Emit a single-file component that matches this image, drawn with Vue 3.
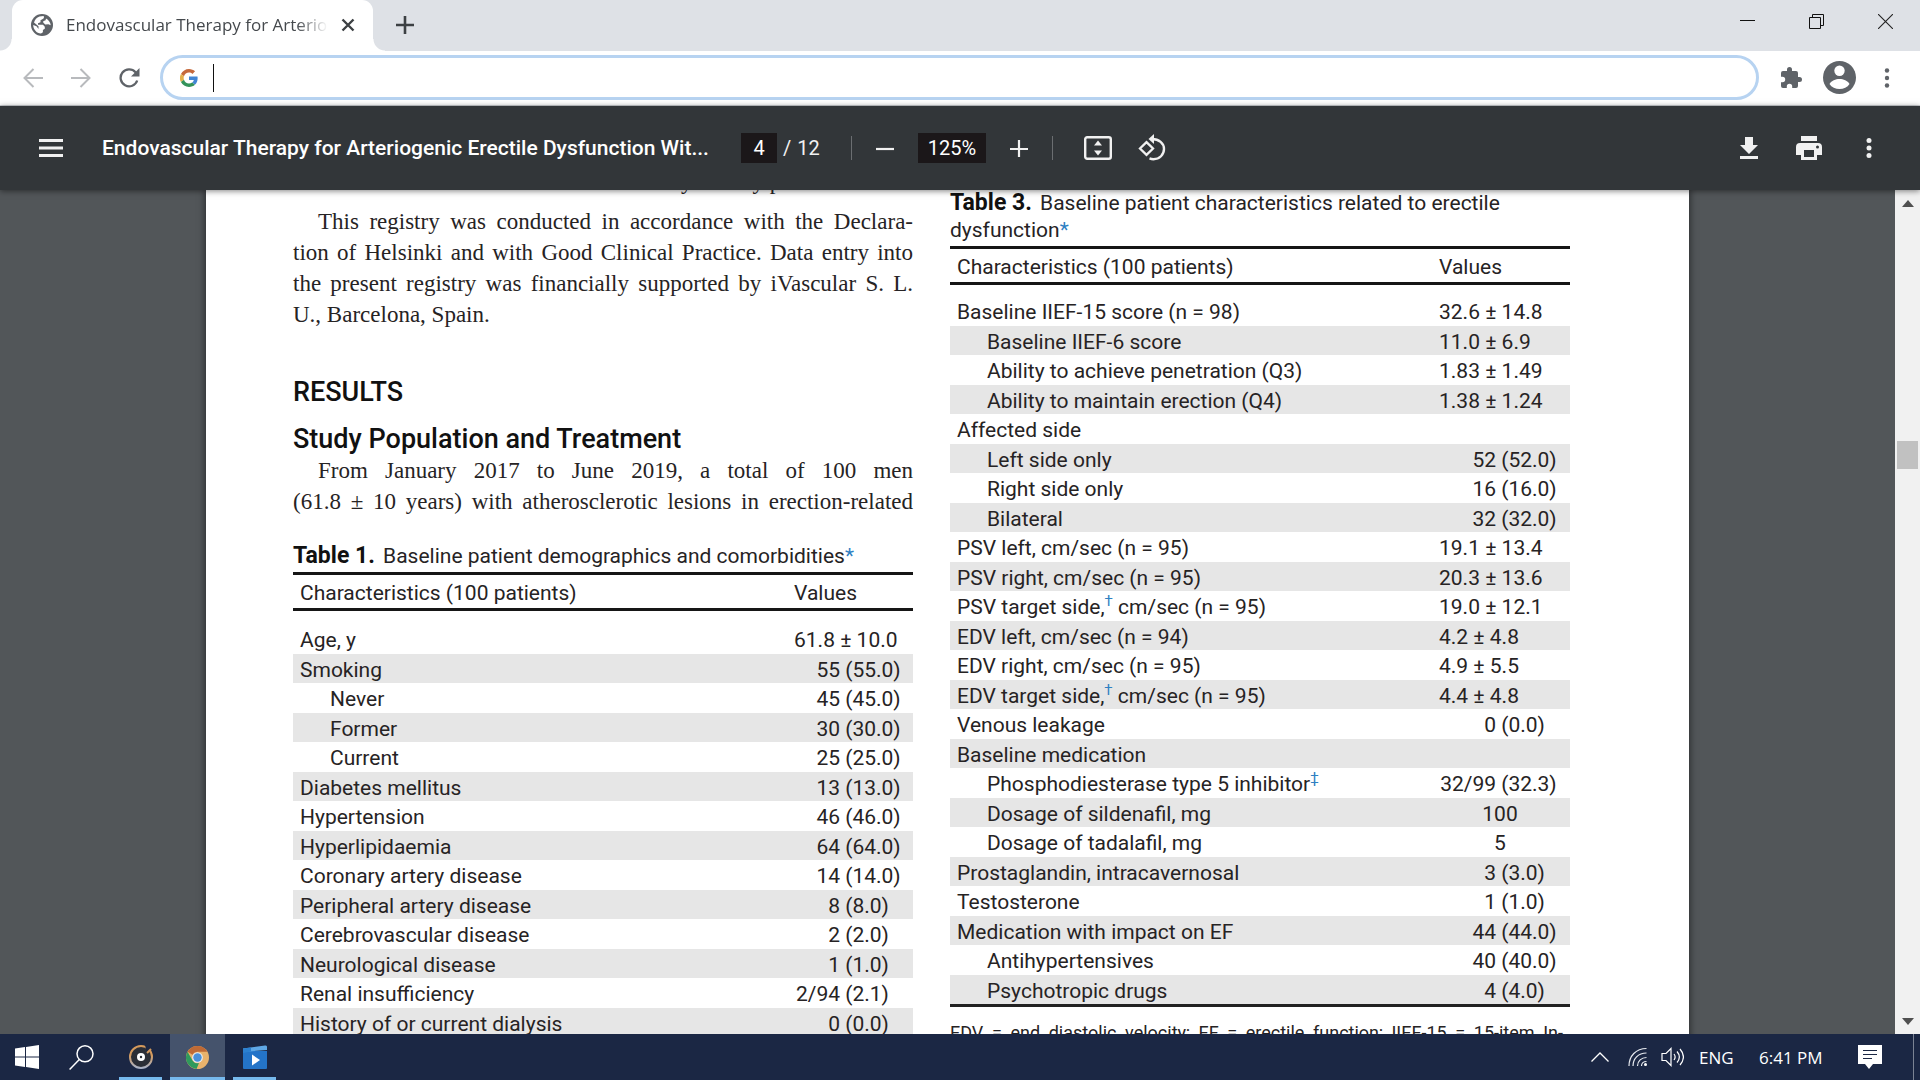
<script setup>
import { ref } from 'vue'

const address = ref('')
const pageNumber = ref('4')
const zoomLevel = ref('125%')

const paragraph = [
  'This registry was conducted in accordance with the Declara-',
  'tion of Helsinki and with Good Clinical Practice. Data entry into',
  'the present registry was financially supported by iVascular S. L.',
  'U., Barcelona, Spain.',
]

const population = [
  'From January 2017 to June 2019, a total of 100 men',
  '(61.8 ± 10 years) with atherosclerotic lesions in erection-related',
]

const demographics = [
  { label: 'Age, y', text: '61.8 ± 10.0' },
  { label: 'Smoking', n: '55', pct: '(55.0)' },
  { label: 'Never', sub: true, n: '45', pct: '(45.0)' },
  { label: 'Former', sub: true, n: '30', pct: '(30.0)' },
  { label: 'Current', sub: true, n: '25', pct: '(25.0)' },
  { label: 'Diabetes mellitus', n: '13', pct: '(13.0)' },
  { label: 'Hypertension', n: '46', pct: '(46.0)' },
  { label: 'Hyperlipidaemia', n: '64', pct: '(64.0)' },
  { label: 'Coronary artery disease', n: '14', pct: '(14.0)' },
  { label: 'Peripheral artery disease', n: '8', pct: '(8.0)' },
  { label: 'Cerebrovascular disease', n: '2', pct: '(2.0)' },
  { label: 'Neurological disease', n: '1', pct: '(1.0)' },
  { label: 'Renal insufficiency', n: '2/94', pct: '(2.1)' },
  { label: 'History of or current dialysis', n: '0', pct: '(0.0)' },
]

const characteristics = [
  { label: 'Baseline IIEF-15 score (n = 98)', text: '32.6 ± 14.8' },
  { label: 'Baseline IIEF-6 score', sub: true, text: '11.0 ± 6.9' },
  { label: 'Ability to achieve penetration (Q3)', sub: true, text: '1.83 ± 1.49' },
  { label: 'Ability to maintain erection (Q4)', sub: true, text: '1.38 ± 1.24' },
  { label: 'Affected side' },
  { label: 'Left side only', sub: true, n: '52', pct: '(52.0)' },
  { label: 'Right side only', sub: true, n: '16', pct: '(16.0)' },
  { label: 'Bilateral', sub: true, n: '32', pct: '(32.0)' },
  { label: 'PSV left, cm/sec (n = 95)', text: '19.1 ± 13.4' },
  { label: 'PSV right, cm/sec (n = 95)', text: '20.3 ± 13.6' },
  { label: 'PSV target side,', mark: '†', rest: ' cm/sec (n = 95)', text: '19.0 ± 12.1' },
  { label: 'EDV left, cm/sec (n = 94)', text: '4.2 ± 4.8' },
  { label: 'EDV right, cm/sec (n = 95)', text: '4.9 ± 5.5' },
  { label: 'EDV target side,', mark: '†', rest: ' cm/sec (n = 95)', text: '4.4 ± 4.8' },
  { label: 'Venous leakage', n: '0', pct: '(0.0)' },
  { label: 'Baseline medication' },
  { label: 'Phosphodiesterase type 5 inhibitor', mark: '‡', sub: true, n: '32/99', pct: '(32.3)' },
  { label: 'Dosage of sildenafil, mg', sub: true, center: '100' },
  { label: 'Dosage of tadalafil, mg', sub: true, center: '5' },
  { label: 'Prostaglandin, intracavernosal', n: '3', pct: '(3.0)' },
  { label: 'Testosterone', n: '1', pct: '(1.0)' },
  { label: 'Medication with impact on EF', n: '44', pct: '(44.0)' },
  { label: 'Antihypertensives', sub: true, n: '40', pct: '(40.0)' },
  { label: 'Psychotropic drugs', sub: true, n: '4', pct: '(4.0)' },
]
</script>

<template>
  <div class="screen">
    <header class="tabstrip">
      <div class="tab">
        <svg class="favicon" width="22" height="22" viewBox="0 0 22 22">
          <circle cx="11" cy="11" r="11" fill="#5f6368" />
          <path d="M8.500 2.500 12.500 2c1 1 .5 2.300-.8 3L9.500 6.200v2L7 9.300v1.400h5l1.800 2v2l-1.900 1.200v2.300L10 19.600C5.500 19.300 2.300 15.500 2.200 11l3.300 1.200L7.500 15v-2.800L3 8.400C3.900 5.600 5.600 3.500 8.500 2.500ZM15 4.500c2.700 1.500 4.500 4 4.700 6.800l-2.300-1-3.200.2-2-2V7.200l2.400-1Z" fill="#fff" />
        </svg>
        <span class="tab-title">Endovascular Therapy for Arterio</span>
        <button class="icon-btn tab-close" aria-label="Close tab">
          <svg width="14" height="14" viewBox="0 0 14 14"><path d="M1.500 1.500l11 11M12.500 1.500l-11 11" stroke="#3c4043" stroke-width="2.400" /></svg>
        </button>
      </div>
      <button class="icon-btn new-tab" aria-label="New tab">
        <svg width="18" height="18" viewBox="0 0 18 18"><path d="M9 0v18M0 9h18" stroke="#3c4043" stroke-width="2.600" /></svg>
      </button>
      <div class="window-controls">
        <button class="icon-btn" aria-label="Minimize">
          <svg width="15" height="15" viewBox="0 0 15 15"><path d="M0 6.500h15" stroke="#111" /></svg>
        </button>
        <button class="icon-btn" aria-label="Restore">
          <svg width="15" height="15" viewBox="0 0 15 15"><path d="M.5 3.500h11v11H.5zM3.500 3V.5h11v11H12" fill="none" stroke="#111" /></svg>
        </button>
        <button class="icon-btn" aria-label="Close">
          <svg width="15" height="15" viewBox="0 0 15 15"><path d="M0 0l15 15M15 0L0 15" stroke="#222" stroke-width="1.100" /></svg>
        </button>
      </div>
    </header>

    <nav class="toolbar">
      <div class="nav-buttons">
        <button class="icon-btn" aria-label="Back">
          <svg width="20" height="20" viewBox="0 0 20 20"><path d="M20 10H2M10.500 1 1.500 10l9 9" fill="none" stroke="#b8babd" stroke-width="2" /></svg>
        </button>
        <button class="icon-btn" aria-label="Forward">
          <svg width="20" height="20" viewBox="0 0 20 20"><path d="M0 10h18M9.500 1l9 9-9 9" fill="none" stroke="#b8babd" stroke-width="2" /></svg>
        </button>
        <button class="icon-btn" aria-label="Reload">
          <svg width="22" height="20" viewBox="0 0 22 20"><path d="M18.200 12.500A8.500 8.500 0 1 1 16.500 4.200L18 6" fill="none" stroke="#5f6368" stroke-width="2.300" /><path d="M20.500 0v8.500H12Z" fill="#5f6368" /></svg>
        </button>
      </div>
      <label class="omnibox">
        <svg width="18" height="18" viewBox="0 0 48 48">
          <path fill="#c5693c" d="M24 9.500c3.500 0 6.700 1.200 9.200 3.600l6.900-6.900C35.900 2.400 30.500 0 24 0 14.600 0 6.500 5.400 2.600 13.200l8 6.200C12.400 13.700 17.700 9.500 24 9.500z" />
          <path fill="#4285d4" d="M47 24.600c0-1.600-.2-3.100-.4-4.600H24v9h12.900c-.6 3-2.200 5.500-4.700 7.200l7.700 6C44.400 38 47 31.800 47 24.600z" />
          <path fill="#e3b04b" d="M10.500 28.600A14.500 14.500 0 0 1 10.500 19.400l-8-6.200a24 24 0 0 0 0 21.600z" />
          <path fill="#34935a" d="M24 48c6.500 0 11.900-2.100 15.900-5.800l-7.700-6c-2.200 1.500-4.900 2.300-8.200 2.300-6.300 0-11.600-4.200-13.500-9.900l-8 6.200C6.500 42.600 14.600 48 24 48z" />
        </svg>
        <span class="caret"></span>
        <input v-model="address" type="text" aria-label="Address and search bar" />
      </label>
      <div class="toolbar-right">
        <button class="icon-btn" aria-label="Extensions">
          <svg width="21" height="22" viewBox="2 1 21 22"><path d="M20.500 11H19V7a2 2 0 0 0-2-2h-4V3.500a2.500 2.500 0 0 0-5 0V5H4a2 2 0 0 0-2 2v3.800h1.500a2.700 2.700 0 0 1 0 5.400H2V20a2 2 0 0 0 2 2h3.800v-1.500a2.700 2.700 0 0 1 5.400 0V22H17a2 2 0 0 0 2-2v-4h1.500a2.500 2.500 0 0 0 0-5z" fill="#5f6368" /></svg>
        </button>
        <button class="icon-btn" aria-label="Profile">
          <svg width="33" height="33" viewBox="0 0 33 33"><circle cx="16.500" cy="16.500" r="16.500" fill="#5f6368" /><circle cx="16.500" cy="9.800" r="5.200" fill="#fff" /><path d="M6.500 23c2-3.500 6-5 10-5s8 1.500 10 5c-2 3.400-6 5-10 5s-8-1.600-10-5Z" fill="#fff" /></svg>
        </button>
        <button class="icon-btn" aria-label="Menu">
          <svg width="6" height="20" viewBox="0 0 6 20" fill="#5f6368"><circle cx="3" cy="2.500" r="2.200" /><circle cx="3" cy="10" r="2.200" /><circle cx="3" cy="17.500" r="2.200" /></svg>
        </button>
      </div>
    </nav>

    <div class="pdf-bar">
      <button class="icon-btn" aria-label="Sidebar">
        <svg width="24" height="18" viewBox="0 0 24 18"><path d="M0 1.500h24M0 9h24M0 16.500h24" stroke="#f1f1f1" stroke-width="2.800" /></svg>
      </button>
      <h1 class="pdf-title">Endovascular Therapy for Arteriogenic Erectile Dysfunction Wit...</h1>
      <div class="pager">
        <input v-model="pageNumber" class="page-input" type="text" aria-label="Page number" />
        <span>/</span>
        <span>12</span>
      </div>
      <i class="divider"></i>
      <div class="zoomer">
        <button class="icon-btn" aria-label="Zoom out">
          <svg width="18" height="18" viewBox="0 0 18 18"><path d="M0 10h18" stroke="#f1f1f1" stroke-width="2.200" /></svg>
        </button>
        <input v-model="zoomLevel" class="zoom-input" type="text" aria-label="Zoom level" />
        <button class="icon-btn" aria-label="Zoom in">
          <svg width="18" height="18" viewBox="0 0 18 18"><path d="M0 10h18M9 1v17" stroke="#f1f1f1" stroke-width="2.200" /></svg>
        </button>
      </div>
      <i class="divider"></i>
      <div class="view-tools">
        <button class="icon-btn" aria-label="Fit to page">
          <svg width="28" height="24" viewBox="0 0 28 24"><rect x="1.200" y="1.200" width="25.600" height="21.600" rx="2" fill="none" stroke="#f1f1f1" stroke-width="2.400" /><path d="M14 4.500l4 5h-8zM14 19.500l4-5h-8z" fill="#f1f1f1" /></svg>
        </button>
        <button class="icon-btn" aria-label="Rotate">
          <svg width="28" height="28" viewBox="0 0 28 28"><path d="M8.500 8.200l6.500 6.300-6.500 6.300L2 14.500Z" fill="none" stroke="#f1f1f1" stroke-width="2.300" /><path d="M14 5c7 0 12 4.300 12 10s-4.500 10.200-10.500 10.200c-1.500 0-2.500-.2-4-.8" fill="none" stroke="#f1f1f1" stroke-width="2.400" /><path d="M16 0v10l-5.500-5z" fill="#f1f1f1" /></svg>
        </button>
      </div>
      <div class="pdf-actions">
        <button class="icon-btn" aria-label="Download">
          <svg width="18" height="22" viewBox="0 0 18 22" fill="#f1f1f1"><path d="M5 0h8v8h5l-9 9-9-9h5zM0 19h18v3H0z" /></svg>
        </button>
        <button class="icon-btn" aria-label="Print">
          <svg width="26" height="24" viewBox="0 0 26 24"><path d="M5 0h16v5H5zM4 7h18a4 4 0 0 1 4 4v8h-5v5H5v-5H0v-8a4 4 0 0 1 4-4z" fill="#f1f1f1" /><path d="M8 14h10v7H8z" fill="#323639" /><circle cx="21.500" cy="11" r="1.500" fill="#323639" /></svg>
        </button>
        <button class="icon-btn" aria-label="More actions">
          <svg width="6" height="20" viewBox="0 0 6 20" fill="#f1f1f1"><circle cx="3" cy="2.500" r="2.500" /><circle cx="3" cy="10" r="2.500" /><circle cx="3" cy="17.500" r="2.500" /></svg>
        </button>
      </div>
    </div>

    <main class="viewer">
      <div class="canvas">
        <article class="page">
          <section class="col">
            <p class="serif-line previous">y a study p</p>
            <p class="serif-text">
              <span v-for="(line, i) in paragraph" :key="i" class="serif-line" :class="{ indent: i === 0, last: i === 3 }">{{ line }}</span>
            </p>
            <h2>RESULTS</h2>
            <h3>Study Population and Treatment</h3>
            <p class="serif-text">
              <span v-for="(line, i) in population" :key="i" class="serif-line" :class="{ indent: i === 0 }">{{ line }}</span>
            </p>
            <table class="data demographics">
              <caption><b>Table 1.</b> Baseline patient demographics and comorbidities<a href="#note">*</a></caption>
              <thead>
                <tr><th scope="col">Characteristics (100 patients)</th><th scope="col" class="value">Values</th></tr>
              </thead>
              <tbody>
                <tr v-for="row in demographics" :key="row.label">
                  <td :class="{ sub: row.sub }">{{ row.label }}</td>
                  <td class="value"><template v-if="row.n"><span class="count">{{ row.n }}</span> {{ row.pct }}</template><template v-else>{{ row.text }}</template></td>
                </tr>
              </tbody>
            </table>
          </section>

          <section class="col">
            <table class="data characteristics">
              <caption><b>Table 3.</b> Baseline patient characteristics related to erectile<br />dysfunction<a href="#note">*</a></caption>
              <thead>
                <tr><th scope="col">Characteristics (100 patients)</th><th scope="col" class="value">Values</th></tr>
              </thead>
              <tbody>
                <tr v-for="row in characteristics" :key="row.label">
                  <td :class="{ sub: row.sub }">{{ row.label }}<a v-if="row.mark" class="mark" href="#note">{{ row.mark }}</a>{{ row.rest }}</td>
                  <td class="value"><template v-if="row.n"><span class="count">{{ row.n }}</span> {{ row.pct }}</template><span v-else-if="row.center" class="centered">{{ row.center }}</span><template v-else>{{ row.text }}</template></td>
                </tr>
              </tbody>
            </table>
            <p id="note" class="footnote">EDV = end diastolic velocity; EF = erectile function; IIEF-15 = 15-item In-</p>
          </section>
        </article>
      </div>
      <div class="scrollbar">
        <svg width="12" height="7" viewBox="0 0 12 7"><path d="M6 0l6 7H0z" fill="#505050" /></svg>
        <div class="track"><div class="thumb"></div></div>
        <svg width="12" height="7" viewBox="0 0 12 7"><path d="M6 7l6-7H0z" fill="#505050" /></svg>
      </div>
    </main>

    <footer class="taskbar">
      <button class="task" aria-label="Start">
        <svg width="24" height="24" viewBox="0 0 24 24" fill="#fff"><path d="M0 3.400l10-1.400v9.500H0zM11 1.900L24 0v11.500H11zM0 12.500h10V22L0 20.600zM11 12.500h13V24l-13-1.900z" /></svg>
      </button>
      <button class="task search" aria-label="Search">
        <svg width="25" height="25" viewBox="0 0 25 25" fill="none" stroke="#fff" stroke-width="1.500"><circle cx="16" cy="8.800" r="8" /><path d="M10.300 14.500L.6 24.400" /></svg>
      </button>
      <button class="task running" aria-label="Music player">
        <svg width="24" height="24" viewBox="0 0 24 24"><defs><linearGradient id="ring" x1="0" y1="0" x2="0" y2="1"><stop offset=".4" stop-color="#d59a5c" /><stop offset="1" stop-color="#a9b2c6" /></linearGradient></defs><circle cx="12" cy="12" r="11" fill="#2b2e36" stroke="url(#ring)" stroke-width="2" /><path d="M16 0h5v6l-3 3z" fill="#1b2744" /><path d="M18 8l4-4" stroke="#d59a5c" stroke-width="2" /><circle cx="12" cy="12" r="4" fill="#fff" /><circle cx="12" cy="12" r="1.200" fill="#2b2e36" /></svg>
      </button>
      <button class="task running active" aria-label="Chrome">
        <svg width="23" height="23" viewBox="0 0 24 24"><circle cx="12" cy="12" r="12" fill="#e9b36c" /><path d="M12 0a12 12 0 0 1 10.400 6H12a6 6 0 0 0-5.200 3L1.600 6A12 12 0 0 1 12 0z" fill="#bf6a35" /><path d="M1.600 6l5.200 9a6 6 0 0 0 5.200 3l1.500-.2L11 24A12 12 0 0 1 1.600 6z" fill="#2f9a5c" /><circle cx="12" cy="12" r="5.600" fill="#e8edf2" /><circle cx="12" cy="12" r="4.400" fill="#4a90d9" /></svg>
      </button>
      <button class="task running movies" aria-label="Movies">
        <svg width="24" height="24" viewBox="0 0 24 24"><path d="M0 6h24v17a1 1 0 0 1-1 1H1a1 1 0 0 1-1-1z" fill="#2474c8" /><path d="M0 3.500L22 .500a1.500 1.500 0 0 1 2 1.500v3L0 7z" fill="#5fa8e6" /><path d="M0 3.500l8-1v4L0 8z" fill="#2b80d0" /><path d="M9 9.500l8 5.500-8 5.500z" fill="#fff" /></svg>
      </button>
      <div class="tray">
        <svg width="18" height="10" viewBox="0 0 18 10" fill="none" stroke="#fff" stroke-width="1.300"><path d="M.5 9.500L9 1l8.500 8.500" /></svg>
        <svg width="20" height="20" viewBox="0 0 20 20" fill="none" stroke="#e8ebf0" stroke-width="1.200"><path d="M1 19C1 9 8 1.500 18.500 1.500M5 19C5 12 10 6 18.500 6M9.500 19c0-5 4-8.500 9-8.500M13.500 19c0-2.500 2-4.500 5-4.500" /><circle cx="17.500" cy="17.500" r="1.500" fill="#fff" stroke="none" /></svg>
        <svg width="23" height="20" viewBox="0 0 23 20" fill="none" stroke="#fff" stroke-width="1.200"><path d="M1 6.500h4L10 1.500v17l-5-5H1zM13 7c1.500 2 1.500 4 0 6M16 4.500c3 3.500 3 7.500 0 11M19 2c4.300 5 4.300 11 0 16" /></svg>
        <span class="lang">ENG</span>
        <time>6:41 PM</time>
        <button class="icon-btn notice" aria-label="Notifications">
          <svg width="24" height="24" viewBox="0 0 24 24"><path d="M0 0h24v19H15l-4 5-4-5H0z" fill="#fff" /><path d="M5 5.500h14M5 9.500h14M5 13.500h9" stroke="#1b2744" stroke-width="1.200" /></svg>
        </button>
        <i class="show-desktop"></i>
      </div>
    </footer>
  </div>
</template>

<style>
body {
  margin: 0;
}
</style>

<style scoped>
.screen {
  display: flex;
  flex-direction: column;
  height: 100vh;
  overflow: hidden;
  background: #fff;
}

svg {
  display: block;
  flex: none;
}

.icon-btn,
.task {
  display: flex;
  align-items: center;
  justify-content: center;
  padding: 0;
  border: 0;
  background: none;
}

/* Tab strip */
.tabstrip {
  display: flex;
  align-items: stretch;
  height: 51px;
  flex: none;
  background: #dee1e6;
}

.tab {
  position: relative;
  display: flex;
  align-items: center;
  box-sizing: border-box;
  width: 361px;
  margin-left: 12px;
  padding: 0 18px 2px 19px;
  border-radius: 11px 11px 0 0;
  background: #fff;
}

.tab::before,
.tab::after {
  content: '';
  position: absolute;
  bottom: 0;
  width: 12px;
  height: 12px;
}

.tab::before {
  right: 100%;
  background: radial-gradient(circle at 0 0, #dee1e6 11px, #fff 12px);
}

.tab::after {
  left: 100%;
  background: radial-gradient(circle at 100% 0, #dee1e6 11px, #fff 12px);
}

.tab-title {
  flex: 1;
  margin: 0 13px;
  overflow: hidden;
  white-space: nowrap;
  font: 17px 'Open Sans', sans-serif;
  color: #45494d;
  -webkit-mask-image: linear-gradient(90deg, #000 88%, transparent);
  mask-image: linear-gradient(90deg, #000 88%, transparent);
}

.new-tab {
  margin-left: 23px;
  padding-bottom: 2px;
}

.window-controls {
  display: flex;
  align-items: center;
  gap: 54px;
  margin: 0 27px 8px auto;
}

/* Browser toolbar */
.toolbar {
  display: flex;
  align-items: center;
  box-sizing: border-box;
  height: 55px;
  flex: none;
  padding: 0 30px 1px 23px;
  border-bottom: 1px solid #d0d3d7;
}

.nav-buttons {
  display: flex;
  gap: 28px;
}

.omnibox {
  display: flex;
  align-items: center;
  flex: 1;
  box-sizing: border-box;
  height: 45px;
  margin: 0 22px 0 19px;
  padding: 0 17px;
  border: 3px solid #b7d3f1;
  border-radius: 23px;
}

.caret {
  width: 1px;
  height: 28px;
  margin-left: 15px;
  background: #111;
}

.omnibox input {
  flex: 1;
  border: 0;
  outline: 0;
  background: none;
  font: 19px 'Open Sans', sans-serif;
}

.toolbar-right {
  display: flex;
  align-items: center;
  gap: 21px;
}

.toolbar-right .icon-btn:last-child {
  margin-left: 7px;
}

/* PDF toolbar */
.pdf-bar {
  position: relative;
  z-index: 1;
  display: flex;
  align-items: center;
  box-sizing: border-box;
  height: 84px;
  flex: none;
  padding: 0 48px 0 39px;
  background: #323639;
  box-shadow: 0 1px 6px rgba(0, 0, 0, 0.5);
  font: 20px Roboto, sans-serif;
  color: #f1f1f1;
}

.pdf-title {
  width: 602px;
  margin: 0 0 0 39px;
  white-space: nowrap;
  font: 500 21px Roboto, sans-serif;
  color: #fff;
}

.pager {
  display: flex;
  align-items: center;
  gap: 6px;
  width: 110px;
  margin-left: 37px;
}

.page-input,
.zoom-input {
  box-sizing: border-box;
  height: 30px;
  padding: 0;
  border: 0;
  background: #1b1719;
  font: 20px Roboto, sans-serif;
  color: #fff;
  text-align: center;
}

.page-input {
  width: 36px;
}

.zoom-input {
  width: 68px;
}

.divider {
  width: 1px;
  height: 24px;
  background: #6b6e71;
}

.zoomer {
  display: flex;
  align-items: center;
  gap: 24px;
  margin: 0 24px;
}

.view-tools {
  display: flex;
  align-items: center;
  gap: 26px;
  margin-left: 31px;
}

.pdf-actions {
  display: flex;
  align-items: center;
  gap: 38px;
  margin-left: auto;
}

.pdf-actions .icon-btn:last-child {
  margin-left: 6px;
}

/* Document */
.viewer {
  display: flex;
  flex: 1;
  min-height: 0;
  overflow: hidden;
}

.canvas {
  flex: 1;
  background: #525659;
}

.page {
  display: grid;
  grid-template-columns: 1fr 1fr;
  gap: 37px;
  margin: 0 206px;
  padding: 0 119px 0 87px;
  background: #fff;
  box-shadow: 0 0 7px 1px rgba(0, 0, 0, 0.5);
  font: 21px Roboto, sans-serif;
  color: #262324;
}

.col {
  min-width: 0;
}

.serif-text {
  margin: 0;
}

.serif-line {
  display: block;
  font: 23px/31px 'Liberation Serif', serif;
  text-align: justify;
  text-align-last: justify;
  white-space: nowrap;
}

.serif-line.indent {
  padding-left: 25px;
}

.serif-line.last {
  text-align-last: left;
}

.previous {
  margin: -24px 0 9px;
  padding-left: 388px;
  text-align-last: left;
}

h2,
h3 {
  margin: 0;
  font: 500 27px/32px Roboto, sans-serif;
  color: #111;
}

h2 {
  margin: 46px 0 15px;
}

.data {
  width: 100%;
  border-spacing: 0;
}

.demographics {
  margin-top: 26px;
}

caption {
  padding-bottom: 2px;
  text-align: left;
  line-height: 27px;
}

caption b {
  margin-right: 3px;
  font-size: 23px;
  line-height: 24px;
  font-weight: 700;
  color: #111;
}

.data a {
  color: #2f80c2;
  text-decoration: none;
}

.data .mark {
  line-height: 0;
  vertical-align: 8px;
  font-size: 15px;
}

.data th,
.data td {
  padding: 3px 0 0 7px;
  text-align: left;
  font-weight: 400;
  line-height: 27px;
  white-space: nowrap;
}

.data th {
  padding-top: 4px;
  border-top: 3px solid #161616;
  border-bottom: 3px solid #161616;
  line-height: 29px;
}

.data tr:nth-child(even) td {
  background: #e6e6e6;
  line-height: 26px;
}

.demographics tbody tr:first-child td {
  padding-top: 16px;
}

.characteristics tbody tr:first-child td {
  padding-top: 14px;
}

.data td.sub {
  padding-left: 37px;
}

.data .value {
  padding-left: 0;
}

.demographics .value {
  width: 119px;
}

.characteristics .value {
  width: 131px;
}

.count {
  display: inline-block;
  text-align: right;
}

.demographics .count {
  width: 46px;
}

.characteristics .count {
  width: 57px;
}

.centered {
  display: inline-block;
  width: 122px;
  text-align: center;
}

.characteristics tbody tr:last-child td {
  border-bottom: 3px solid #222;
}

.footnote {
  margin: 14px 0;
  padding-right: 7px;
  font-size: 18px;
  line-height: 24px;
  white-space: nowrap;
  text-align-last: justify;
}

.scrollbar {
  display: flex;
  flex-direction: column;
  align-items: center;
  box-sizing: border-box;
  width: 25px;
  padding: 10px 0 9px;
  background: #f1f1f1;
}

.track {
  flex: 1;
  width: 21px;
  padding-top: 234px;
}

.thumb {
  height: 28px;
  background: #c1c1c1;
}

/* Taskbar */
.taskbar {
  display: flex;
  height: 46px;
  flex: none;
  background: #1b2744;
  color: #fff;
}

.task {
  width: 54px;
}

.task.search {
  width: 55px;
  margin-right: 10px;
}

.task.running {
  box-sizing: border-box;
  width: 43px;
  padding-top: 3px;
  border-bottom: 3px solid #76b9ed;
}

.task.active {
  width: 55px;
  margin: 0 8px;
  background: #45536c;
}

.tray {
  display: flex;
  align-items: center;
  margin-left: auto;
  font: 17px 'Open Sans', sans-serif;
}

.tray svg + svg {
  margin-left: 19px;
}

.tray svg + svg + svg {
  margin-left: 13px;
}

.lang {
  width: 60px;
  margin-left: 15px;
}

time {
  width: 66px;
  white-space: nowrap;
}

.notice {
  margin-left: 33px;
}

.show-desktop {
  align-self: stretch;
  width: 6px;
  margin-left: 31px;
  border-left: 1px solid #7b8394;
}
</style>
